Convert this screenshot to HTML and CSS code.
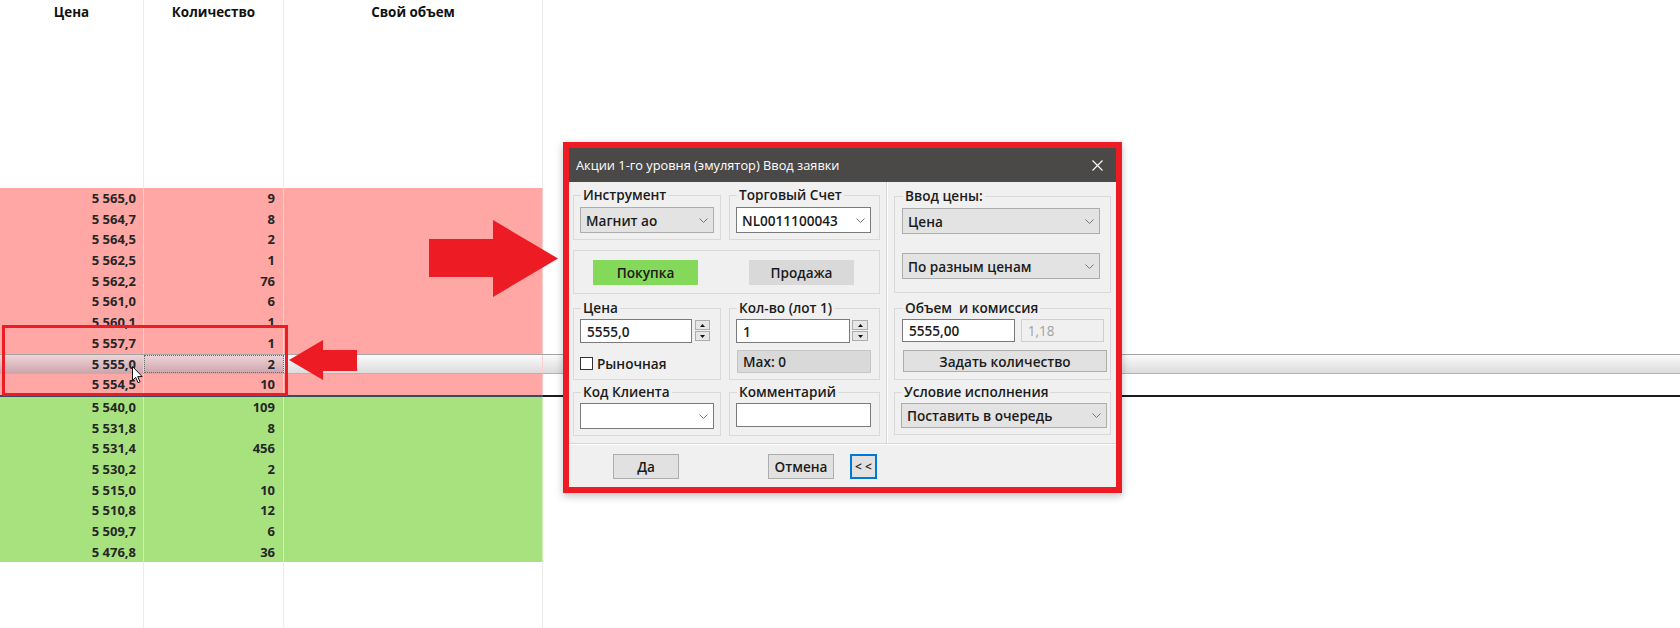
FILE: index.html
```html
<!DOCTYPE html>
<html lang="ru">
<head>
    <meta charset="UTF-8">
    <title>Стакан и ввод заявки</title>
    <link rel="stylesheet" href="styles.css">
</head>
<body>
    <div class="book">
        <div class="row head">
            <div class="c price">Цена</div>
            <div class="c qty">Количество</div>
            <div class="c own">Свой объем</div>
            <div class="rest"></div>
        </div>
        <div class="row blank">
            <div class="c price"></div><div class="c qty"></div><div class="c own"></div><div class="rest"></div>
        </div>

        <div class="row ask"><div class="c price">5 565,0</div><div class="c qty">9</div><div class="c own"></div><div class="rest"></div></div>
        <div class="row ask"><div class="c price">5 564,7</div><div class="c qty">8</div><div class="c own"></div><div class="rest"></div></div>
        <div class="row ask"><div class="c price">5 564,5</div><div class="c qty">2</div><div class="c own"></div><div class="rest"></div></div>
        <div class="row ask"><div class="c price">5 562,5</div><div class="c qty">1</div><div class="c own"></div><div class="rest"></div></div>
        <div class="row ask"><div class="c price">5 562,2</div><div class="c qty">76</div><div class="c own"></div><div class="rest"></div></div>
        <div class="row ask"><div class="c price">5 561,0</div><div class="c qty">6</div><div class="c own"></div><div class="rest"></div></div>
        <div class="row ask"><div class="c price">5 560,1</div><div class="c qty">1</div><div class="c own"></div><div class="rest"></div></div>
        <div class="row ask"><div class="c price">5 557,7</div><div class="c qty">1</div><div class="c own"></div><div class="rest"></div></div>
        <div class="row ask cur"><div class="c price">5 555,0</div><div class="c qty">2</div><div class="c own"></div><div class="rest"></div></div>
        <div class="row ask"><div class="c price">5 554,5</div><div class="c qty">10</div><div class="c own"></div><div class="rest"></div></div>

        <div class="spread"></div>

        <div class="row bid"><div class="c price">5 540,0</div><div class="c qty">109</div><div class="c own"></div><div class="rest"></div></div>
        <div class="row bid"><div class="c price">5 531,8</div><div class="c qty">8</div><div class="c own"></div><div class="rest"></div></div>
        <div class="row bid"><div class="c price">5 531,4</div><div class="c qty">456</div><div class="c own"></div><div class="rest"></div></div>
        <div class="row bid"><div class="c price">5 530,2</div><div class="c qty">2</div><div class="c own"></div><div class="rest"></div></div>
        <div class="row bid"><div class="c price">5 515,0</div><div class="c qty">10</div><div class="c own"></div><div class="rest"></div></div>
        <div class="row bid"><div class="c price">5 510,8</div><div class="c qty">12</div><div class="c own"></div><div class="rest"></div></div>
        <div class="row bid"><div class="c price">5 509,7</div><div class="c qty">6</div><div class="c own"></div><div class="rest"></div></div>
        <div class="row bid"><div class="c price">5 476,8</div><div class="c qty">36</div><div class="c own"></div><div class="rest"></div></div>

        <div class="row tail">
            <div class="c price"></div><div class="c qty"></div><div class="c own"></div><div class="rest"></div>
        </div>
    </div>

    <!-- annotation marks drawn over the screenshot -->
    <svg class="marks" width="1680" height="628" viewBox="0 0 1680 628">
        <rect x="3.5" y="326.5" width="283" height="68" fill="none" stroke="#ed1c24" stroke-width="3"/>
        <polygon points="429,239 493,239 493,220 558,258.5 493,297 493,277 429,277" fill="#ed1c24"/>
        <polygon points="357,350 323,350 323,340 289,360 323,380 323,371 357,371" fill="#ed1c24"/>
        <path d="M132.5 366.5v14l3.2-3.1 2.4 5.3 2-0.9-2.4-5.2h4.5z" fill="#fff" stroke="#111" stroke-width="1" stroke-linejoin="round"/>
    </svg>

    <div class="dlg">
        <div class="dlg-title">
            <span>Акции 1-го уровня (эмулятор) Ввод заявки</span>
            <svg width="11" height="11" viewBox="0 0 11 11"><path d="M0.5 0.5l10 10M10.5 0.5l-10 10" stroke="#fff" stroke-width="1.1"/></svg>
        </div>
        <div class="dlg-main">
            <div class="left">
                <div class="two r1">
                    <fieldset>
                        <legend>Инструмент</legend>
                        <div class="sel w134">Магнит ао<svg width="9" height="5" viewBox="0 0 9 5"><polyline points="0.5,0.5 4.5,4.5 8.5,0.5" fill="none" stroke="#777"/></svg></div>
                    </fieldset>
                    <fieldset>
                        <legend>Торговый Счет</legend>
                        <div class="sel white w135">NL0011100043<svg width="9" height="5" viewBox="0 0 9 5"><polyline points="0.5,0.5 4.5,4.5 8.5,0.5" fill="none" stroke="#777"/></svg></div>
                    </fieldset>
                </div>
                <fieldset class="r2">
                    <div class="side buy">Покупка</div>
                    <div class="side sell">Продажа</div>
                </fieldset>
                <div class="two r3">
                    <fieldset>
                        <legend>Цена</legend>
                        <div class="pair">
                            <div class="inp w112">5555,0</div>
                            <div class="spin">
                                <span><svg width="5" height="3" viewBox="0 0 5 3"><polygon points="0,3 2.5,0 5,3" fill="#111"/></svg></span>
                                <span><svg width="5" height="3" viewBox="0 0 5 3"><polygon points="0,0 2.5,3 5,0" fill="#111"/></svg></span>
                            </div>
                        </div>
                        <div class="chk"><span class="box"></span>Рыночная</div>
                    </fieldset>
                    <fieldset>
                        <legend>Кол-во (лот 1)</legend>
                        <div class="pair">
                            <div class="inp w114">1</div>
                            <div class="spin wide">
                                <span><svg width="5" height="3" viewBox="0 0 5 3"><polygon points="0,3 2.5,0 5,3" fill="#111"/></svg></span>
                                <span><svg width="5" height="3" viewBox="0 0 5 3"><polygon points="0,0 2.5,3 5,0" fill="#111"/></svg></span>
                            </div>
                        </div>
                        <div class="max">Max: 0</div>
                    </fieldset>
                </div>
                <div class="two r4">
                    <fieldset>
                        <legend>Код Клиента</legend>
                        <div class="sel white w134">&nbsp;<svg width="9" height="5" viewBox="0 0 9 5"><polyline points="0.5,0.5 4.5,4.5 8.5,0.5" fill="none" stroke="#777"/></svg></div>
                    </fieldset>
                    <fieldset>
                        <legend>Комментарий</legend>
                        <div class="inp w135"></div>
                    </fieldset>
                </div>
            </div>
            <div class="right">
                <fieldset class="q1">
                    <legend>Ввод цены:</legend>
                    <div class="sel w198">Цена<svg width="9" height="5" viewBox="0 0 9 5"><polyline points="0.5,0.5 4.5,4.5 8.5,0.5" fill="none" stroke="#777"/></svg></div>
                    <div class="sel w198 second">По разным ценам<svg width="9" height="5" viewBox="0 0 9 5"><polyline points="0.5,0.5 4.5,4.5 8.5,0.5" fill="none" stroke="#777"/></svg></div>
                </fieldset>
                <fieldset class="q2">
                    <legend>Объем&nbsp; и комиссия</legend>
                    <div class="pair gap6">
                        <div class="inp w115 h23">5555,00</div>
                        <div class="inp off h23">1,18</div>
                    </div>
                    <div class="btn set">Задать количество</div>
                </fieldset>
                <fieldset class="q3">
                    <legend>Условие исполнения</legend>
                    <div class="sel w206 h25">Поставить в очередь<svg width="9" height="5" viewBox="0 0 9 5"><polyline points="0.5,0.5 4.5,4.5 8.5,0.5" fill="none" stroke="#777"/></svg></div>
                </fieldset>
            </div>
        </div>
        <div class="dlg-foot">
            <div class="btn">Да</div>
            <div class="btn cancel">Отмена</div>
            <div class="btn more">&lt; &lt;</div>
        </div>
    </div>
</body>
</html>
```

FILE: styles.css
```css
body {
    margin: 0;
    width: 1680px;
    height: 628px;
    overflow: hidden;
    position: relative;
    background-color: #fff;
    font-family: 'Open Sans', 'Noto Sans', sans-serif;
}

/* order book */
.book {
    width: 1680px;
}
.row {
    display: flex;
    height: 20.7px;
}
.c {
    box-sizing: border-box;
    border-right: 1px solid #ececec;
    padding-right: 7px;
    text-align: right;
    font-size: 13px;
    font-weight: 700;
    line-height: 20.7px;
    color: #262626;
    white-space: nowrap;
}
.price {
    width: 144px;
}
.qty {
    width: 140px;
    padding-right: 8px;
}
.own {
    width: 259px;
}
.rest {
    flex: 1;
}
.head {
    height: 26px;
}
.head .c {
    text-align: center;
    padding: 0;
    font-size: 13.4px;
    line-height: 24px;
    color: #111;
}
.blank {
    height: 162px;
}
.tail {
    height: 70px;
}
.ask .c {
    background-color: #ffa7a4;
    border-right-color: #ffcdcb;
}
.bid .c {
    background-color: #a7e27f;
    border-right-color: #cdefb9;
}
.spread {
    height: 2px;
    background: linear-gradient(to right, #3a4862 543px, #1b1b1b 543px);
}
.row.cur {
    box-sizing: border-box;
    border-top: 1px solid #a5a5a5;
    border-bottom: 1px solid #b4b4b4;
    background: linear-gradient(#fbfbfb, #dcdcdc);
}
.cur .c {
    line-height: 18.7px;
}
.cur .price,
.cur .qty {
    background: linear-gradient(#efd4d8, #cda5ac);
}
.cur .own {
    background: none;
}
.cur .qty {
    outline: 1px dotted #6a6a6a;
    outline-offset: -1px;
}

.marks {
    position: absolute;
    left: 0;
    top: 0;
    pointer-events: none;
}

/* order entry window */
.dlg {
    position: absolute;
    left: 563px;
    top: 142px;
    width: 559px;
    height: 351px;
    box-sizing: border-box;
    border: 6px solid #ed1c24;
    background-color: #f0f0f0;
    box-shadow: 0 3px 8px rgba(0, 0, 0, 0.25);
    font-size: 13.6px;
    font-weight: 600;
    color: #1b1b1b;
}
.dlg-title {
    height: 34px;
    background-color: #4b4947;
    color: #fff;
    font-size: 12.8px;
    font-weight: 400;
    display: flex;
    align-items: center;
    justify-content: space-between;
    padding: 0 13px 0 7px;
}
.dlg-main {
    display: flex;
    height: 262px;
    box-sizing: border-box;
    border-bottom: 1px solid #d6d6d6;
}
.left {
    width: 318px;
    box-sizing: border-box;
    border-right: 1px solid #d6d6d6;
    padding: 5px 0 0 4px;
}
.right {
    flex: 1;
    border-left: 1px solid #fff;
    padding: 6px 0 0 6px;
}
fieldset {
    margin: 0;
    padding: 0 6px;
    border: 1px solid #d9d9d9;
    box-sizing: border-box;
    min-width: 0;
}
legend {
    padding: 0 2px;
    margin-left: 1px;
    line-height: 16px;
}
.two {
    display: grid;
    grid-template-columns: 148px 151px;
    column-gap: 8px;
}
.r1 fieldset {
    height: 53px;
}
.r2 {
    width: 307px;
    height: 44px;
    margin-top: 10px;
    display: flex;
    gap: 51px;
    padding: 9px 0 0 19px;
}
.r3 {
    margin-top: 6px;
}
.r3 fieldset {
    height: 80px;
}
.r4 {
    margin-top: 4px;
}
.r4 fieldset {
    height: 52px;
}
.r1 .sel {
    margin-top: 4px;
}
.r3 .pair,
.r4 .sel,
.r4 .inp {
    margin-top: 3px;
}
.q1 {
    width: 217px;
    height: 105px;
    padding-left: 7px;
}
.q2 {
    width: 217px;
    height: 80px;
    margin-top: 7px;
    padding-left: 7px;
}
.q3 {
    width: 217px;
    height: 51px;
    margin-top: 4px;
    padding-left: 6px;
}
.q1 .sel {
    margin-top: 4px;
}
.q1 .sel.second {
    margin-top: 19px;
}
.q2 .pair,
.q3 .sel {
    margin-top: 3px;
}

.sel {
    height: 26px;
    box-sizing: border-box;
    border: 1px solid #adadad;
    background-color: #e3e3e3;
    display: flex;
    align-items: center;
    justify-content: space-between;
    padding: 0 5px 0 5px;
    white-space: nowrap;
}
.sel.white {
    background-color: #fff;
    border-color: #7a7a7a;
}
.inp {
    height: 24px;
    box-sizing: border-box;
    border: 1px solid #7a7a7a;
    background-color: #fff;
    padding: 0 6px;
    display: flex;
    align-items: center;
}
.inp.off {
    width: 85px;
    border-color: #cfcfcf;
    background-color: #f0f0f0;
    color: #a2a2a2;
    font-weight: 400;
}
.h23 {
    height: 23px;
}
.h25 {
    height: 25px;
}
.w112 { width: 112px; }
.w114 { width: 114px; }
.w115 { width: 115px; }
.w134 { width: 134px; }
.w135 { width: 135px; }
.w198 { width: 198px; }
.w206 { width: 206px; }

.pair {
    display: flex;
    align-items: flex-start;
    gap: 3px;
}
.pair.gap6 {
    gap: 6px;
}
.spin {
    width: 15px;
    margin-top: 1px;
    display: flex;
    flex-direction: column;
    gap: 1px;
}
.spin.wide {
    width: 16px;
    margin-left: -1px;
}
.spin span {
    height: 10px;
    box-sizing: border-box;
    border: 1px solid #adadad;
    background-color: #e6e6e6;
    display: flex;
    align-items: center;
    justify-content: center;
}
.chk {
    display: flex;
    align-items: center;
    gap: 4px;
    height: 16px;
    margin-top: 12px;
}
.box {
    width: 13px;
    height: 13px;
    box-sizing: border-box;
    border: 1px solid #333;
    background-color: #fff;
}
.max {
    width: 134px;
    height: 23px;
    box-sizing: border-box;
    margin: 7px 0 0 1px;
    border: 1px solid #c6c6c6;
    background-color: #d9d9d9;
    padding-left: 5px;
    display: flex;
    align-items: center;
}
.side {
    width: 105px;
    height: 25px;
    display: flex;
    align-items: center;
    justify-content: center;
}
.buy {
    background-color: #84d85a;
}
.sell {
    background-color: #d9d9d9;
}
.btn {
    width: 66px;
    height: 25px;
    box-sizing: border-box;
    border: 1px solid #adadad;
    background-color: #e1e1e1;
    display: flex;
    align-items: center;
    justify-content: center;
}
.btn.set {
    width: 204px;
    height: 22px;
    margin: 8px 0 0 1px;
}
.dlg-foot {
    display: flex;
    padding: 9px 0 0 44px;
    border-top: 1px solid #fff;
}
.btn.cancel {
    margin-left: 89px;
}
.btn.more {
    width: 27px;
    margin-left: 16px;
    border-color: #0078d7;
    box-shadow: inset 0 0 0 1px #0078d7;
    font-size: 12px;
}
```
